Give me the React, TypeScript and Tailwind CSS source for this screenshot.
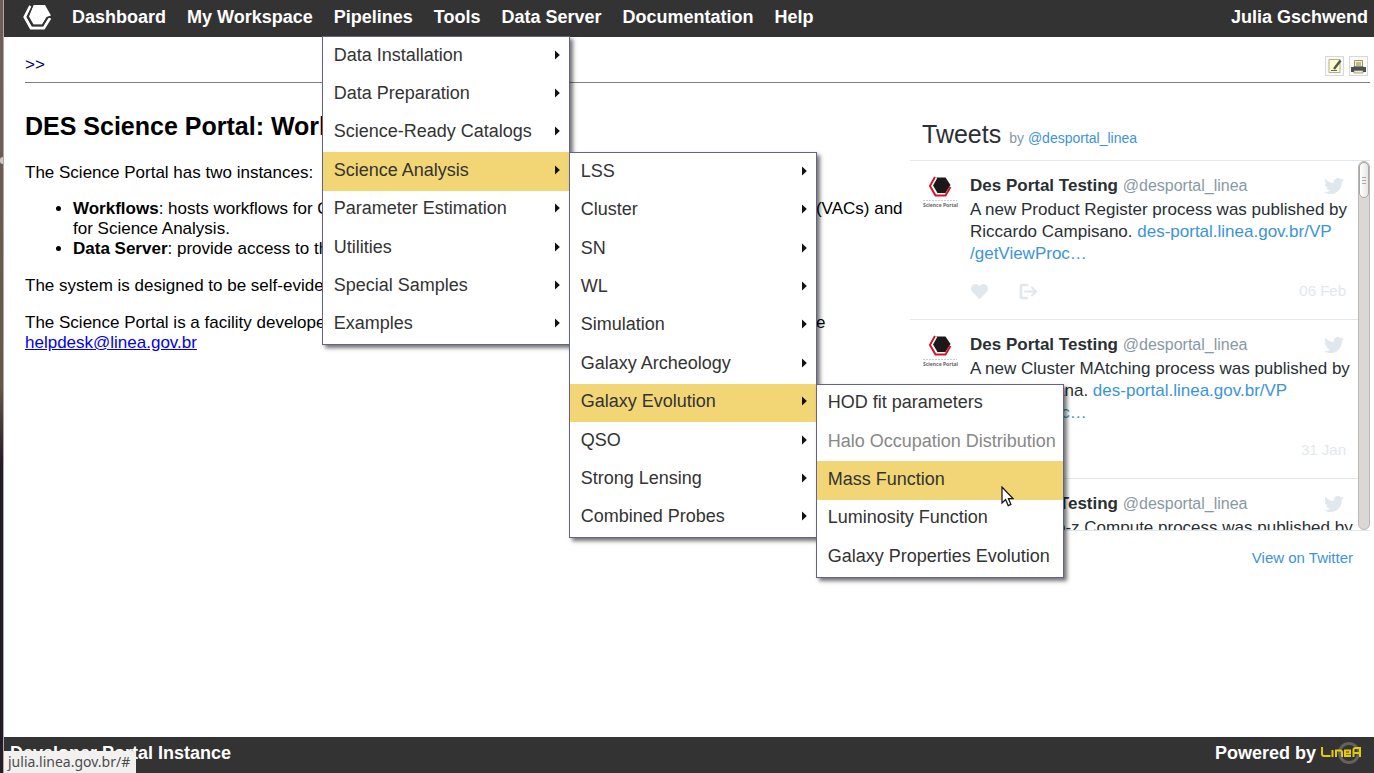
import { ReactNode } from "react";
import { FaHeart, FaTwitter } from "react-icons/fa";

type Item = { label: string; arrow?: boolean; active?: boolean; disabled?: boolean; submenu?: ReactNode };

function MenuRow({ label, arrow, active, disabled, submenu }: Item) {
  return (
    <li className={active ? "relative flex flex-1 bg-[#f2d675]" : "relative flex flex-1 bg-white"}>
      <a
        href="#"
        aria-disabled={disabled}
        className={
          disabled
            ? "flex flex-1 items-center justify-between whitespace-nowrap pr-[9px] pb-[3px] pl-[11px] text-[#888888]"
            : "flex flex-1 items-center justify-between whitespace-nowrap pr-[9px] pb-[3px] pl-[11px] text-[#333333]"
        }
      >
        {label}
        {arrow && (
          <svg width="6" height="10" viewBox="0 0 6 10" aria-hidden="true">
            <path d="M1 0.5L5.8 5L1 9.5Z" fill="#111" />
          </svg>
        )}
      </a>
      {submenu}
    </li>
  );
}

const panel = "absolute z-10 flex w-[248px] flex-col border border-[#62628c] bg-white text-[18px] leading-5 font-normal shadow-[3px_3px_4px_rgba(0,0,0,0.55)]";

const evolutionItems: Item[] = [
  { label: "HOD fit parameters" },
  { label: "Halo Occupation Distribution", disabled: true },
  { label: "Mass Function", active: true },
  { label: "Luminosity Function" },
  { label: "Galaxy Properties Evolution" },
];

function EvolutionMenu() {
  return (
    <ul className={`${panel} top-0 left-full h-[194px]`}>
      {evolutionItems.map((item) => (
        <MenuRow key={item.label} {...item} />
      ))}
      <li aria-hidden="true" className="absolute top-[101px] left-[184px]">
        <svg width="13" height="21" viewBox="0 0 13 21">
          <path d="M1 1V17L4.6 13.6L7.2 19.6L9.9 18.4L7.4 12.6H12Z" fill="#fff" stroke="#111" strokeWidth="1.2" />
        </svg>
      </li>
    </ul>
  );
}

const analysisItems: Item[] = [
  { label: "LSS" },
  { label: "Cluster" },
  { label: "SN" },
  { label: "WL" },
  { label: "Simulation" },
  { label: "Galaxy Archeology" },
  { label: "Galaxy Evolution", active: true, submenu: <EvolutionMenu /> },
  { label: "QSO" },
  { label: "Strong Lensing" },
  { label: "Combined Probes" },
];

function AnalysisMenu() {
  return (
    <ul className={`${panel} top-0 left-full h-[386px]`}>
      {analysisItems.map((item) => (
        <MenuRow key={item.label} arrow {...item} />
      ))}
    </ul>
  );
}

const pipelineItems: Item[] = [
  { label: "Data Installation" },
  { label: "Data Preparation" },
  { label: "Science-Ready Catalogs" },
  { label: "Science Analysis", active: true, submenu: <AnalysisMenu /> },
  { label: "Parameter Estimation" },
  { label: "Utilities" },
  { label: "Special Samples" },
  { label: "Examples" },
];

function PipelinesMenu() {
  return (
    <ul className={`${panel} top-full -left-3 h-[309px]`}>
      {pipelineItems.map((item) => (
        <MenuRow key={item.label} arrow {...item} />
      ))}
    </ul>
  );
}

function Header() {
  const links = ["Dashboard", "My Workspace", "Pipelines", "Tools", "Data Server", "Documentation", "Help"];
  return (
    <header className="flex h-[37px] items-start justify-between bg-[#333333] pr-[6px] pl-[18px] text-[18px] leading-[34px] font-bold text-white">
      <nav className="flex items-start">
        <a href="#" aria-label="Home" className="mt-1 mr-5">
          <svg width="30" height="27" viewBox="0 0 30 27">
            <path d="M11.5 1H23L29 11.5L24.500 13L20 20.500H11.500L7 12.500Z" fill="#fff" />
            <path d="M8.500 2L2.800 13L9 24H21.800L28 14" fill="none" stroke="#fff" strokeWidth="2.800" />
            <path d="M10.800 1L5.500 12.700L10.500 21.600H20.800L25.200 13.800L30 12.300" fill="none" stroke="#333" strokeWidth="1.500" />
          </svg>
        </a>
        <ul className="flex gap-[21px]">
          {links.map((label) => (
            <li key={label} className="relative h-9">
              <a href="#" className="whitespace-nowrap">{label}</a>
              {label === "Pipelines" && <PipelinesMenu />}
            </li>
          ))}
        </ul>
      </nav>
      <a href="#">Julia Gschwend</a>
    </header>
  );
}

function Toolbar() {
  return (
    <div className="flex h-[46px] items-center justify-between border-b border-[#808080] pt-3">
      <span className="pb-[2px] text-[17px] leading-5 text-[#000066]">&gt;&gt;</span>
      <div className="flex gap-[5px] pr-[2px]">
        <button aria-label="Edit" className="flex h-5 w-[19px] items-center justify-center border border-[#d8d8d8] bg-[#fafafa]">
          <svg width="17" height="18" viewBox="0 0 17 18" className="shrink-0">
            <path d="M3 2.500H14V15.500H3Z" fill="#ffffcc" stroke="#b0af90" />
            <path d="M14.500 3.500L8 12" stroke="#555" strokeWidth="2.400" />
            <path d="M5 13.500H11" stroke="#666" />
          </svg>
        </button>
        <button aria-label="Print" className="flex h-5 w-[19px] items-center justify-center border border-[#d8d8d8] bg-[#fafafa]">
          <svg width="17" height="18" viewBox="0 0 17 18" className="shrink-0">
            <path d="M4.500 3.500H12.500V10H4.500Z" fill="#f7f0c0" stroke="#9a9468" />
            <path d="M6 6H11M6 8H11" stroke="#88835c" />
            <path d="M1 10H3.500V9.500H13.500V10H16V15H1Z" fill="#4b4f51" />
            <path d="M4 13.500H13V16H4Z" fill="#f0ebc0" stroke="#777" strokeWidth="0.600" />
          </svg>
        </button>
      </div>
    </div>
  );
}

function Avatar() {
  return (
    <svg width="36" height="36" viewBox="0 0 36 36" className="shrink-0" role="img" aria-label="Science Portal">
      <path d="M14.5 4.5H23.5L28.5 12L23.5 20H14.5L10.5 12Z" fill="#1d1718" />
      <path d="M13 4L8 13L13.5 22.5H23.5L28.5 14" fill="none" stroke="#d3122a" strokeWidth="2" />
      <path d="M14.5 5L10.2 12.7L14.8 20.2" fill="none" stroke="#fff" strokeWidth="1.4" />
      <path d="M1 27.5H35" stroke="#ccc" strokeWidth="1" strokeDasharray="2 1" />
      <text x="1" y="34" fontSize="5" fontWeight="bold" fontFamily="Noto Sans, sans-serif" fill="#666">Science Portal</text>
    </svg>
  );
}

const tweets = [
  { text: "A new Product Register process was published by", author: "Riccardo Campisano.", date: "06 Feb" },
  { text: "A new Cluster MAtching process was published by", author: "Julia Campana.", date: "31 Jan" },
  { text: "A new Photo-z Compute process was published by", author: "Julia Gschwend.", date: "31 Jan" },
];

function Tweets() {
  return (
    <aside className="w-[460px] shrink-0">
      <h2 className="flex h-[50px] items-baseline gap-2 pl-3 text-[25px] leading-[48px] text-[#292f33]">
        Tweets
        <span className="text-[14px] text-[#8899a6]">
          by <a href="#" className="text-[#3b94d9]">@desportal_linea</a>
        </span>
      </h2>
      <div className="flex h-[371px] border-y border-[#e1e8ed]">
        <ul className="flex-1 overflow-hidden">
          {tweets.map((t) => (
            <li key={t.text} className="flex h-[159px] gap-3 border-b border-[#e1e8ed] pt-3 pl-3 text-[17px] text-[#292f33]">
              <Avatar />
              <div className="min-w-0 flex-1">
                <div className="flex items-center justify-between pr-[14px] leading-[26px]">
                  <p className="whitespace-nowrap">
                    <b>Des Portal Testing</b> <span className="text-[16px] text-[#8899a6]">@desportal_linea</span>
                  </p>
                  <FaTwitter size={20} color="#e1e8ed" />
                </div>
                <p className="leading-[22px] whitespace-nowrap">
                  {t.text}
                  <br />
                  {t.author} <a href="#" className="text-[#3b94d9]">des-portal.linea.gov.br/VP<br />/getViewProc…</a>
                </p>
                <div className="flex items-center pt-4 pr-3 text-[15px] leading-5 text-[#e1e8ed]">
                  <button aria-label="Like" className="mr-[31px] ml-px"><FaHeart size={17} /></button>
                  <button aria-label="Share">
                    <svg width="19" height="17" viewBox="0 0 19 17" fill="none" stroke="currentColor" strokeWidth="2.6">
                      <path d="M9 2H2V15H9" strokeLinejoin="round" />
                      <path d="M6 8.5H17M13 4.5L17 8.5L13 12.5" strokeLinecap="round" strokeLinejoin="round" strokeWidth="2.2" />
                    </svg>
                  </button>
                  <span className="ml-auto">{t.date}</span>
                </div>
              </div>
            </li>
          ))}
        </ul>
        <div className="w-3 rounded-full border border-[#bab7b4] bg-[#dad8d5]">
          <div className="flex h-9 flex-col items-center justify-center gap-[2px] rounded-full border border-[#aaa7a3] bg-linear-to-r from-white to-[#e8e6e4]">
            <i className="h-px w-1 bg-[#aaa]" />
            <i className="h-px w-1 bg-[#aaa]" />
            <i className="h-px w-1 bg-[#aaa]" />
          </div>
        </div>
      </div>
      <p className="pt-4 pr-[17px] text-right text-[15px] leading-[22px]">
        <a href="#" className="text-[#3b94d9]">View on Twitter</a>
      </p>
    </aside>
  );
}

function Article() {
  return (
    <article className="min-w-0 flex-1 text-[17px] leading-5 text-black">
      <h1 className="text-[25px] leading-8 font-bold">DES Science Portal: Workflows</h1>
      <p className="mt-[21px]">The Science Portal has two instances:</p>
      <ul className="mt-4 list-disc pl-12">
        <li>
          <b>Workflows</b>: hosts workflows for Quality Assessment, for creating reference Value-Added Catalogs (VACs) and
          for Science Analysis.
        </li>
        <li><b>Data Server</b>: provide access to the data products</li>
      </ul>
      <p className="mt-[17px]">The system is designed to be self-evident.</p>
      <p className="mt-[17px]">
        The Science Portal is a facility developed and maintained by LIneA. For questions and help please use the
        <br />
        <a href="#" className="text-[#0000ee] underline">helpdesk@linea.gov.br</a>
      </p>
    </article>
  );
}

function Footer() {
  return (
    <footer className="relative flex h-9 items-start justify-between bg-[#333333] pr-3 pl-[6px] text-[18px] leading-8 font-bold text-white">
      <span>Developer Portal Instance</span>
      <span className="flex items-center gap-1">
        Powered by
        <svg width="42" height="26" viewBox="0 0 42 26" role="img" aria-label="LIneA">
          <circle cx="29" cy="13" r="9.5" fill="none" stroke="#626262" strokeWidth="3" />
          <g fill="none" stroke="#e3cb0c" strokeWidth="2">
            <path d="M2 7V14Q2 16 4 16H10.500" />
            <path d="M12.500 10V17" />
            <path d="M16 17V10.500H20Q22 10.500 22 12.500V17" />
            <path d="M25 13.500H30V10.500H25V16H31" />
            <path d="M33.500 17V10Q33.500 8 35.500 8H40V17M33.500 13H40" />
          </g>
        </svg>
      </span>
      <span className="absolute bottom-0 left-0 rounded-tr-sm bg-[#f2f1f0] pr-[6px] pl-1 font-['Noto_Sans','Open_Sans',sans-serif] text-[14px] leading-[22px] font-normal text-[#4c4c4c]">
        julia.linea.gov.br/#
      </span>
    </footer>
  );
}

export default function App() {
  return (
    <div className="flex min-h-screen font-['Liberation_Sans',Arial,sans-serif]">
      <div className="flex w-1 shrink-0 flex-col border-r border-[#b5a6a2] bg-linear-to-b from-[#6e5f5c] via-[#655848] via-50% to-[#221c28] to-60% pt-[157px]">
        <i className="h-[7px] rounded-l-full bg-[#cccccc]" />
      </div>
      <div className="flex min-w-0 flex-1 flex-col bg-white">
        <Header />
        <main className="flex-1 pr-1 pl-[21px]">
          <Toolbar />
          <div className="flex gap-1 pt-[27px]">
            <Article />
            <Tweets />
          </div>
        </main>
        <Footer />
      </div>
    </div>
  );
}
